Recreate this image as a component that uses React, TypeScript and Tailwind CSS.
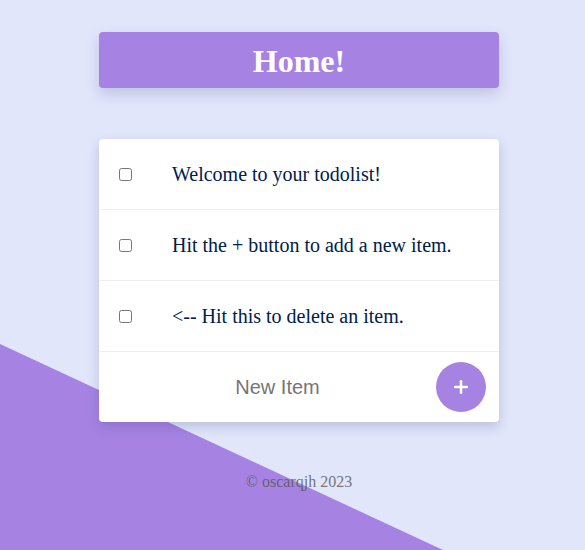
import { Plus } from 'lucide-react';

const ITEMS = [
  'Welcome to your todolist!',
  'Hit the + button to add a new item.',
  '<-- Hit this to delete an item.',
];

export default function App() {
  return (
    <div className="relative min-h-screen overflow-hidden bg-[#e1e6fb]">
      {/* diagonal backdrop */}
      <div className="absolute inset-0 bg-[#a683e3] [clip-path:polygon(0_344px,443px_550px,0_550px)]" />

      <div className="relative flex justify-center pl-[13px]">
        <div className="w-[400px] pt-8">
          <div className="flex h-[56px] items-center justify-center rounded bg-[#a683e3] pt-[2px] shadow-[0_6px_14px_rgba(60,60,120,0.2)]">
            <h1 className="font-['Liberation_Serif',serif] text-[32px] font-bold text-white">Home!</h1>
          </div>

          <div className="mt-[51px] rounded bg-white shadow-[0_5px_12px_rgba(60,60,110,0.22)]">
            {ITEMS.map((item) => (
              <div key={item} className="flex h-[71px] items-center border-b border-[#eeeeee]">
                <input type="checkbox" className="ml-5 h-[13px] w-[13px]" />
                <p className="ml-[40px] font-['Liberation_Serif',serif] text-[20px] text-[#00204a]">{item}</p>
              </div>
            ))}
            <div className="flex h-[70px] items-center">
              <input
                type="text"
                placeholder="New Item"
                className="w-[337px] bg-transparent pl-5 text-center font-['Liberation_Sans',sans-serif] text-[20px] text-[#333] outline-none placeholder:text-[#757575]"
              />
              <button className="flex h-[50px] w-[50px] items-center justify-center rounded-full bg-[#a683e3] text-white">
                <Plus className="h-5 w-5" strokeWidth={3} />
              </button>
            </div>
          </div>

          <p className="mt-[48px] text-center font-['Liberation_Serif',serif] text-[16px] text-[#555]/80">
            © oscarqjh 2023
          </p>
        </div>
      </div>
    </div>
  );
}
